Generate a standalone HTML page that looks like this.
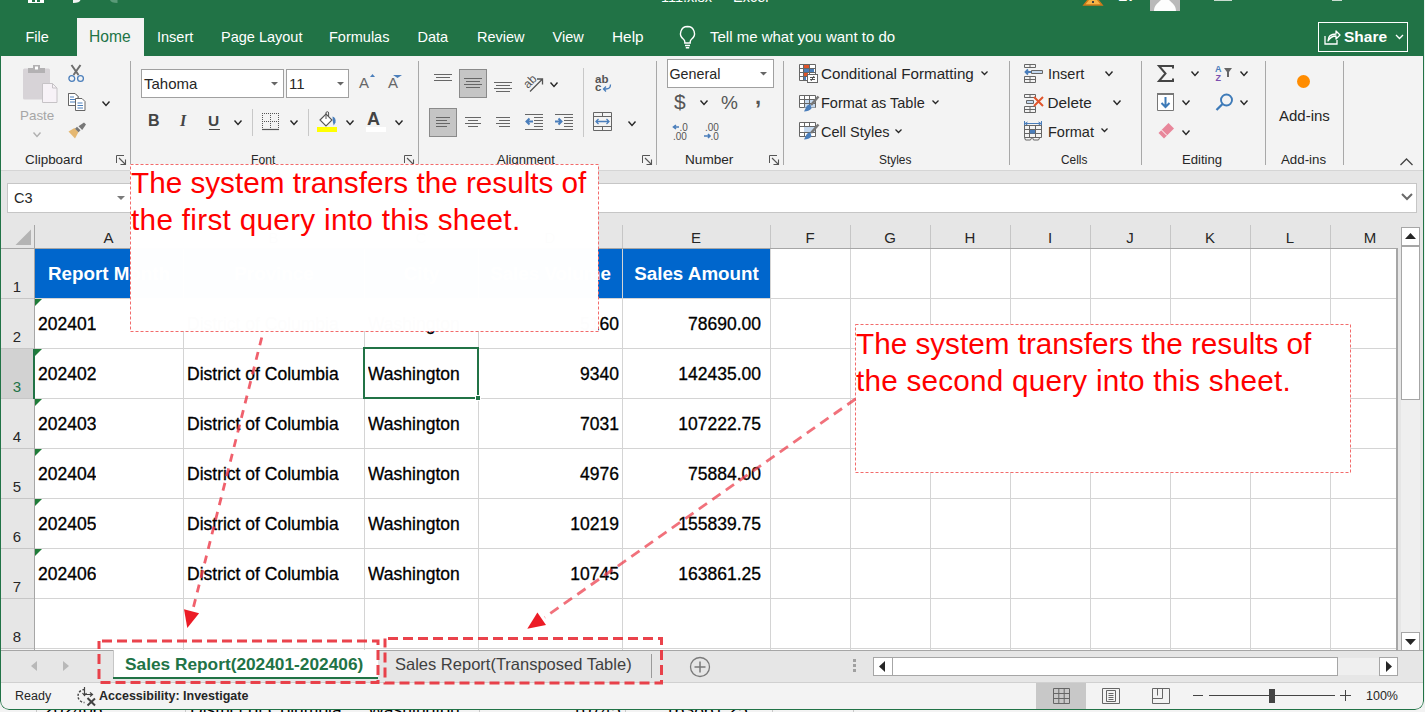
<!DOCTYPE html><html><head><meta charset="utf-8"><style>
*{box-sizing:border-box;margin:0;padding:0}
html,body{width:1425px;height:712px;overflow:hidden;background:#f0f0f0;font-family:"Liberation Sans",sans-serif;color:#262626}
.a{position:absolute;white-space:nowrap}
svg{position:absolute;overflow:visible}
#win{position:absolute;left:0;top:0;width:1424px;height:710px;border-radius:0 0 9px 9px;overflow:hidden;background:#f3f3f3}
#wb{position:absolute;left:0;top:-10px;width:1424px;height:720px;border:1px solid #217346;border-radius:0 0 9px 9px;pointer-events:none}
.tab{position:absolute;top:28px;font-size:14.5px;color:#fff;line-height:18px;white-space:nowrap}
.lbl{position:absolute;top:152px;font-size:12.5px;color:#262626;line-height:16px;white-space:nowrap}
.sep{position:absolute;top:61px;width:1px;height:104px;background:#a8a8a8}
.btn{position:absolute;font-size:14.5px;color:#262626;line-height:18px;white-space:nowrap}
.hdr{position:absolute;top:225px;height:23px;font-size:15px;color:#262626;text-align:center;line-height:24px;border-right:1px solid #c6c6c6}
.rh{position:absolute;left:0;width:34px;height:50px;font-size:15px;color:#262626;text-align:center;line-height:16px;padding-top:31px}
.cell{position:absolute;height:50px;font-size:17.5px;color:#000;line-height:52px;-webkit-text-stroke:0.3px #000;white-space:nowrap;overflow:hidden}
.tri{position:absolute;width:0;height:0;border-top:7px solid #1e7b38;border-right:7px solid transparent}
</style></head><body>
<div class="a" style="left:0;top:708px;width:1425px;height:4px;background:#f3f3f3;overflow:hidden"><div class="a" style="left:36px;top:0;width:1px;height:4px;background:#c8c8c8"></div><div class="a" style="left:185px;top:0;width:1px;height:4px;background:#c8c8c8"></div><div class="a" style="left:338px;top:0;width:1px;height:4px;background:#c8c8c8"></div><div class="a" style="left:479px;top:0;width:1px;height:4px;background:#c8c8c8"></div><div class="a" style="left:625px;top:0;width:1px;height:4px;background:#c8c8c8"></div><div class="a" style="left:772px;top:0;width:1px;height:4px;background:#c8c8c8"></div><div class="a" style="left:853px;top:0;width:1px;height:4px;background:#c8c8c8"></div><div class="a" style="left:44px;top:-7px;font-size:17.5px;line-height:18px;color:#000">202406</div><div class="a" style="left:190px;top:-7px;font-size:17.5px;line-height:18px;color:#000">District of Columbia</div><div class="a" style="left:368px;top:-7px;font-size:17.5px;line-height:18px;color:#000">Washington</div><div class="a" style="left:572px;top:-7px;font-size:17.5px;line-height:18px;color:#000">10745</div><div class="a" style="left:665px;top:-7px;font-size:17.5px;line-height:18px;color:#000">163861.25</div></div>
<div id="win">
<div class="a" style="left:0;top:0;width:1424px;height:56px;background:#217346"></div>
<div class="a" style="left:28px;top:0;width:16px;height:3px;background:#fff"></div>
<div class="a" style="left:32px;top:0;width:3px;height:2px;background:#217346"></div><div class="a" style="left:37px;top:0;width:3px;height:2px;background:#217346"></div>
<svg style="left:73px;top:0" width="8" height="4"><path d="M0 0H7.5C7 1.8 4.5 3 0 3z" fill="#f4f4f4"/></svg>
<svg style="left:110px;top:0" width="8" height="4"><path d="M7.5 0H0C0.5 1.8 3 3 7.5 3z" fill="#5a9a78"/></svg>
<div class="a" style="left:661px;top:-11px;font-size:14.5px;color:#fff;line-height:16px">111.xlsx &nbsp;-&nbsp; Excel</div>
<svg style="left:1083px;top:-6px" width="20" height="12"><path d="M10 0 L19 11 L1 11 Z" fill="#f7b446" stroke="#d07a1a" stroke-width="1.5"/><rect x="9" y="7" width="2" height="2" fill="#444"/></svg>
<div class="a" style="left:1118px;top:-12px;font-size:15px;color:#fff;font-weight:bold;line-height:16px">LT</div>
<svg style="left:1150px;top:0" width="31" height="11"><rect x="0" y="0" width="30" height="11" fill="#b9b9b9"/><path d="M4 11C4 5 8 3 11 0H19C22 3 26 5 26 11z" fill="#fdfdfd"/></svg>
<div class="a" style="left:1214px;top:0;width:18px;height:1px;background:#c9dcd0"></div>
<div class="a" style="left:1332px;top:0;width:10px;height:1px;background:#c9dcd0"></div>
<div class="a" style="left:77px;top:18px;width:67px;height:38px;background:#f3f3f3"></div>
<div class="tab" style="left:25.5px">File</div>
<div class="tab" style="left:89px;color:#217346;font-size:15.6px">Home</div>
<div class="tab" style="left:157px">Insert</div>
<div class="tab" style="left:221px">Page Layout</div>
<div class="tab" style="left:329px">Formulas</div>
<div class="tab" style="left:417.5px">Data</div>
<div class="tab" style="left:477px">Review</div>
<div class="tab" style="left:552.5px">View</div>
<div class="tab" style="left:612px;font-size:15.4px">Help</div>
<svg style="left:678px;top:25px" width="20" height="24"><path d="M9.5 1.5a7 7 0 0 0-4 12.7c.8.7 1.3 1.6 1.3 2.8v1h5.4v-1c0-1.2.5-2.1 1.3-2.8a7 7 0 0 0-4-12.7z" fill="none" stroke="#fff" stroke-width="1.4"/><path d="M7 20.5h5M7.8 22.8h3.4" stroke="#fff" stroke-width="1.4"/></svg>
<div class="tab" style="left:710px;font-size:15px">Tell me what you want to do</div>
<div class="a" style="left:1318px;top:22px;width:90px;height:30px;border:1px solid #fff"></div>
<svg style="left:1323px;top:28px" width="18" height="18"><path d="M2 8v8h12v-4" fill="none" stroke="#fff" stroke-width="1.3"/><path d="M5 13c0-5 3-7 8-7V3l4 4-4 4V8c-4 0-6 1.5-8 5z" fill="none" stroke="#fff" stroke-width="1.3" stroke-linejoin="round"/></svg>
<div class="tab" style="left:1344px;font-weight:bold;font-size:15.5px;top:28px">Share</div>
<svg style="left:1395px;top:34px" width="9" height="6"><path d="M1 1l3.5 3.5L8 1" fill="none" stroke="#fff" stroke-width="1.3"/></svg>
<div class="a" style="left:0;top:170px;width:1424px;height:1px;background:#d5d5d5"></div>
<div class="sep" style="left:130px"></div>
<div class="sep" style="left:418px"></div>
<div class="sep" style="left:656px"></div>
<div class="sep" style="left:783px"></div>
<div class="sep" style="left:1009px"></div>
<div class="sep" style="left:1141px"></div>
<div class="sep" style="left:1265px"></div>
<div class="sep" style="left:1343px"></div>
<div class="lbl" style="left:25px;font-size:13.45px">Clipboard</div>
<div class="lbl" style="left:251px;font-size:12.15px">Font</div>
<div class="lbl" style="left:497px;font-size:13.0px">Alignment</div>
<div class="lbl" style="left:685px;font-size:13.6px">Number</div>
<div class="lbl" style="left:879px;font-size:11.9px">Styles</div>
<div class="lbl" style="left:1061px;font-size:11.85px">Cells</div>
<div class="lbl" style="left:1182px;font-size:13.1px">Editing</div>
<div class="lbl" style="left:1281px;font-size:13.3px">Add-ins</div>
<svg style="left:23px;top:64px" width="36" height="40"><rect x="0" y="4.5" width="27" height="31" rx="1.5" fill="#d7d3d7"/><rect x="5" y="4" width="17" height="5" fill="#b3b1b3"/><rect x="10" y="1" width="7" height="4" fill="#b3b1b3"/><rect x="12" y="2.5" width="3" height="3" fill="#fff"/><path d="M19.5 19.5h10l4.5 4.5v14.5h-14.5z" fill="#f7f2f7" stroke="#c6c3c6" stroke-width="1"/><path d="M29.5 19.5v4.5h4.5" fill="none" stroke="#c6c3c6"/></svg>
<div class="btn" style="left:20px;top:107px;color:#a6a6a6;font-size:13.4px">Paste</div>
<svg style="left:33px;top:132px" width="8" height="5"><path d="M0.5 0.5L4.0 4.5L7.5 0.5" fill="none" stroke="#b0b0b0" stroke-width="1.4"/></svg>
<svg style="left:68px;top:64px" width="18" height="19"><path d="M3.5 1l7 10M12.5 1l-7 10" stroke="#6d6d6d" stroke-width="2"/><circle cx="3.8" cy="14.5" r="2.9" fill="none" stroke="#4a7ebb" stroke-width="1.3"/><circle cx="12.5" cy="14.5" r="2.9" fill="none" stroke="#4a7ebb" stroke-width="1.3"/></svg>
<svg style="left:68px;top:93px" width="18" height="19"><path d="M0.5 12.5V0.5h6.5l3 3v2" fill="#fff" stroke="#666" stroke-width="1"/><path d="M0.5 0.5h6.5l3 3V12.5H0.5z" fill="#fff" stroke="#666" stroke-width="1"/><path d="M2 4h4M2 6.5h5M2 9h5" stroke="#4a7ebb" stroke-width="1"/><path d="M7.5 5.5h6.5l3 3V17.5H7.5z" fill="#fff" stroke="#666" stroke-width="1"/><path d="M9.5 10h5M9.5 12.5h5.5M9.5 15h5.5" stroke="#4a7ebb" stroke-width="1"/></svg>
<svg style="left:102px;top:101px" width="8" height="5"><path d="M0.5 0.5L4.0 4.5L7.5 0.5" fill="none" stroke="#262626" stroke-width="1.4"/></svg>
<svg style="left:68px;top:122px" width="19" height="17"><path d="M0.5 9.5L6.5 6l4 4-3.5 6.5z" fill="#e5b872"/><path d="M7 6.8l2 -2 3.5 3.5-2 2z" fill="#777"/><path d="M10.5 4.3l5.5-3.8 2 2-3.8 5.5z" fill="#777"/></svg>
<svg style="left:116px;top:155px" width="11" height="11"><path d="M0.5 8V0.5H8" fill="none" stroke="#555" stroke-width="1"/><path d="M3 3l6.5 6.5M4.5 9.5h5v-5" fill="none" stroke="#555" stroke-width="1.1"/></svg>
<div class="a" style="left:141px;top:69px;width:143px;height:29px;background:#fff;border:1px solid #a0a0a0"></div>
<div class="btn" style="left:144px;top:75px;font-size:15px">Tahoma</div>
<svg style="left:271px;top:82px" width="8" height="4"><path d="M0 0h7l-3.5 3.5z" fill="#666"/></svg>
<div class="a" style="left:286px;top:69px;width:63px;height:29px;background:#fff;border:1px solid #a0a0a0"></div>
<div class="btn" style="left:289px;top:75px;font-size:15px">11</div>
<svg style="left:337px;top:82px" width="8" height="4"><path d="M0 0h7l-3.5 3.5z" fill="#666"/></svg>
<div class="a" style="left:359px;top:75px;font-size:15px;color:#666;line-height:16px">A</div>
<svg style="left:370px;top:74px" width="6" height="4"><path d="M0 3L2.5 0 5 3z" fill="#4a7ebb"/></svg>
<div class="a" style="left:388px;top:75px;font-size:15px;color:#666;line-height:16px">A</div>
<svg style="left:393px;top:75px" width="10" height="4"><path d="M0 0h9l-4.5 3z" fill="#4a7ebb"/></svg>
<div class="a" style="left:148px;top:113px;font-size:16px;font-weight:bold;color:#444;line-height:16px">B</div>
<div class="a" style="left:180px;top:113px;font-size:16px;font-weight:bold;font-style:italic;color:#444;line-height:16px;font-family:'Liberation Serif',serif">I</div>
<div class="a" style="left:208px;top:113px;font-size:15.5px;font-weight:bold;color:#444;line-height:16px">U</div>
<div class="a" style="left:209px;top:129px;width:11px;height:1px;background:#444"></div>
<svg style="left:234px;top:120px" width="8" height="5"><path d="M0.5 0.5L4.0 4.5L7.5 0.5" fill="none" stroke="#262626" stroke-width="1.4"/></svg>
<div class="a" style="left:252px;top:109px;width:1px;height:27px;background:#c8c8c8"></div>
<svg style="left:262px;top:113px" width="18" height="18"><rect x="0" y="0" width="1" height="1" fill="#555"/><rect x="8" y="0" width="1" height="1" fill="#555"/><rect x="16" y="0" width="1" height="1" fill="#555"/><rect x="0" y="2" width="1" height="1" fill="#555"/><rect x="8" y="2" width="1" height="1" fill="#555"/><rect x="16" y="2" width="1" height="1" fill="#555"/><rect x="0" y="4" width="1" height="1" fill="#555"/><rect x="8" y="4" width="1" height="1" fill="#555"/><rect x="16" y="4" width="1" height="1" fill="#555"/><rect x="0" y="6" width="1" height="1" fill="#555"/><rect x="8" y="6" width="1" height="1" fill="#555"/><rect x="16" y="6" width="1" height="1" fill="#555"/><rect x="0" y="8" width="1" height="1" fill="#555"/><rect x="8" y="8" width="1" height="1" fill="#555"/><rect x="16" y="8" width="1" height="1" fill="#555"/><rect x="0" y="10" width="1" height="1" fill="#555"/><rect x="8" y="10" width="1" height="1" fill="#555"/><rect x="16" y="10" width="1" height="1" fill="#555"/><rect x="0" y="12" width="1" height="1" fill="#555"/><rect x="8" y="12" width="1" height="1" fill="#555"/><rect x="16" y="12" width="1" height="1" fill="#555"/><rect x="0" y="14" width="1" height="1" fill="#555"/><rect x="8" y="14" width="1" height="1" fill="#555"/><rect x="16" y="14" width="1" height="1" fill="#555"/><rect x="2" y="0" width="1" height="1" fill="#555"/><rect x="4" y="0" width="1" height="1" fill="#555"/><rect x="6" y="0" width="1" height="1" fill="#555"/><rect x="10" y="0" width="1" height="1" fill="#555"/><rect x="12" y="0" width="1" height="1" fill="#555"/><rect x="14" y="0" width="1" height="1" fill="#555"/><rect x="2" y="8" width="1" height="1" fill="#555"/><rect x="4" y="8" width="1" height="1" fill="#555"/><rect x="6" y="8" width="1" height="1" fill="#555"/><rect x="10" y="8" width="1" height="1" fill="#555"/><rect x="12" y="8" width="1" height="1" fill="#555"/><rect x="14" y="8" width="1" height="1" fill="#555"/><path d="M0 16.5h17" stroke="#555" stroke-width="1.2"/></svg>
<svg style="left:290px;top:120px" width="8" height="5"><path d="M0.5 0.5L4.0 4.5L7.5 0.5" fill="none" stroke="#262626" stroke-width="1.4"/></svg>
<div class="a" style="left:308px;top:109px;width:1px;height:27px;background:#c8c8c8"></div>
<svg style="left:318px;top:111px" width="20" height="17"><path d="M2 9l6-6 6 6-6 6z" fill="#fff" stroke="#555" stroke-width="1.1"/><path d="M8 8V2a1.3 1.3 0 0 1 2.6 0v3" fill="none" stroke="#555" stroke-width="1"/><path d="M14.5 5.5c2.5.5 3.5 2.5 3 6l-1.8 3-.8-3.5z" fill="#4a7ebb"/></svg>
<div class="a" style="left:317px;top:127px;width:20px;height:5px;background:#ffff00"></div>
<svg style="left:346px;top:120px" width="8" height="5"><path d="M0.5 0.5L4.0 4.5L7.5 0.5" fill="none" stroke="#262626" stroke-width="1.4"/></svg>
<div class="a" style="left:367px;top:110px;font-size:18px;font-weight:bold;color:#444;line-height:18px">A</div>
<div class="a" style="left:366px;top:127px;width:20px;height:5px;background:#fff"></div>
<svg style="left:395px;top:120px" width="8" height="5"><path d="M0.5 0.5L4.0 4.5L7.5 0.5" fill="none" stroke="#262626" stroke-width="1.4"/></svg>
<svg style="left:404px;top:155px" width="11" height="11"><path d="M0.5 8V0.5H8" fill="none" stroke="#555" stroke-width="1"/><path d="M3 3l6.5 6.5M4.5 9.5h5v-5" fill="none" stroke="#555" stroke-width="1.1"/></svg>
<svg style="left:434px;top:74px" width="30" height="30"><rect x="0" y="0" width="18" height="1" fill="#666"/><rect x="2" y="3" width="14" height="1" fill="#666"/><rect x="0" y="6" width="18" height="1" fill="#666"/></svg>
<div class="a" style="left:459px;top:69px;width:28px;height:29px;background:#c5c5c5;border:1px solid #8a8a8a"></div>
<svg style="left:464px;top:78px" width="30" height="30"><rect x="0" y="0" width="18" height="1" fill="#666"/><rect x="2" y="3" width="14" height="1" fill="#666"/><rect x="0" y="6" width="18" height="1" fill="#666"/><rect x="2" y="9" width="14" height="1" fill="#666"/></svg>
<svg style="left:494px;top:82px" width="30" height="30"><rect x="0" y="0" width="18" height="1" fill="#666"/><rect x="2" y="3" width="14" height="1" fill="#666"/><rect x="0" y="6" width="18" height="1" fill="#666"/><rect x="2" y="9" width="14" height="1" fill="#666"/></svg>
<svg style="left:523px;top:72px" width="22" height="22"><text x="0" y="0" transform="translate(5 17) rotate(-45)" font-family="Liberation Sans" font-size="12" fill="#555">ab</text><path d="M7 19.5L19 7.5M14 7h5.5v5.5" fill="none" stroke="#555" stroke-width="1.3"/></svg>
<svg style="left:550px;top:82px" width="8" height="5"><path d="M0.5 0.5L4.0 4.5L7.5 0.5" fill="none" stroke="#262626" stroke-width="1.4"/></svg>
<div class="a" style="left:583px;top:68px;width:1px;height:69px;background:#c8c8c8"></div>
<svg style="left:595px;top:73px" width="18" height="20"><text x="0" y="9.5" font-family="Liberation Sans" font-size="11.5" font-weight="bold" fill="#555">ab</text><text x="0" y="18" font-family="Liberation Sans" font-size="11.5" font-weight="bold" fill="#555">c</text><path d="M15.5 11.5c0 3-1.5 4.5-4.5 4.5H8.5M11 13.5l-2.5 2.5 2.5 2.5" fill="none" stroke="#4a7ebb" stroke-width="1.3"/></svg>
<div class="a" style="left:429px;top:108px;width:28px;height:29px;background:#c5c5c5;border:1px solid #8a8a8a"></div>
<svg style="left:436px;top:117px" width="30" height="30"><rect x="0" y="0" width="14" height="1" fill="#666"/><rect x="0" y="3" width="11" height="1" fill="#666"/><rect x="0" y="6" width="14" height="1" fill="#666"/><rect x="0" y="9" width="11" height="1" fill="#666"/></svg>
<svg style="left:465px;top:117px" width="30" height="30"><rect x="0" y="0" width="16" height="1" fill="#666"/><rect x="3" y="3" width="10" height="1" fill="#666"/><rect x="0" y="6" width="16" height="1" fill="#666"/><rect x="3" y="9" width="10" height="1" fill="#666"/></svg>
<svg style="left:496px;top:117px" width="30" height="30"><rect x="0" y="0" width="14" height="1" fill="#666"/><rect x="3" y="3" width="11" height="1" fill="#666"/><rect x="0" y="6" width="14" height="1" fill="#666"/><rect x="3" y="9" width="11" height="1" fill="#666"/></svg>
<svg style="left:525px;top:114px" width="19" height="17"><rect x="0" y="0" width="18" height="1" fill="#666"/><rect x="9" y="3" width="9" height="1" fill="#666"/><rect x="9" y="6" width="9" height="1" fill="#666"/><rect x="9" y="9" width="9" height="1" fill="#666"/><rect x="9" y="12" width="9" height="1" fill="#666"/><rect x="0" y="15" width="18" height="1" fill="#666"/><path d="M8 7.5H2M4.5 4.5L1.5 7.5l3 3" fill="none" stroke="#4a7ebb" stroke-width="2"/></svg>
<svg style="left:555px;top:114px" width="19" height="17"><rect x="0" y="0" width="18" height="1" fill="#666"/><rect x="9" y="3" width="9" height="1" fill="#666"/><rect x="9" y="6" width="9" height="1" fill="#666"/><rect x="9" y="9" width="9" height="1" fill="#666"/><rect x="9" y="12" width="9" height="1" fill="#666"/><rect x="0" y="15" width="18" height="1" fill="#666"/><path d="M0 7.5h6M3.5 4.5l3 3-3 3" fill="none" stroke="#4a7ebb" stroke-width="2"/></svg>
<svg style="left:593px;top:112px" width="20" height="20"><path d="M0.5 0.5h18v18H0.5zM0.5 4.5h18M0.5 14.5h18M9.5 0.5v4M9.5 14.5v4" fill="none" stroke="#666" stroke-width="1"/><path d="M3 9.5h13M5.5 7l-2.5 2.5 2.5 2.5M13.5 7l2.5 2.5-2.5 2.5" fill="none" stroke="#4a7ebb" stroke-width="1.3"/></svg>
<svg style="left:628px;top:121px" width="8" height="5"><path d="M0.5 0.5L4.0 4.5L7.5 0.5" fill="none" stroke="#262626" stroke-width="1.4"/></svg>
<svg style="left:642px;top:155px" width="11" height="11"><path d="M0.5 8V0.5H8" fill="none" stroke="#555" stroke-width="1"/><path d="M3 3l6.5 6.5M4.5 9.5h5v-5" fill="none" stroke="#555" stroke-width="1.1"/></svg>
<div class="a" style="left:667px;top:59px;width:107px;height:29px;background:#fff;border:1px solid #a0a0a0"></div>
<div class="btn" style="left:669.5px;top:65px;font-size:14.3px">General</div>
<svg style="left:760px;top:72px" width="8" height="4"><path d="M0 0h7l-3.5 3.5z" fill="#666"/></svg>
<div class="a" style="left:674px;top:91px;font-size:21px;color:#555;line-height:22px">$</div>
<svg style="left:700px;top:100px" width="8" height="5"><path d="M0.5 0.5L4.0 4.5L7.5 0.5" fill="none" stroke="#262626" stroke-width="1.4"/></svg>
<div class="a" style="left:721px;top:93px;font-size:19px;color:#555;line-height:20px">%</div>
<div class="a" style="left:755px;top:86px;font-size:22px;font-weight:bold;color:#555;line-height:22px">,</div>
<svg style="left:672px;top:122px" width="18" height="18"><path d="M7 5H2M4 3L1.5 5 4 7" fill="none" stroke="#4a7ebb" stroke-width="1.6"/><text x="7.5" y="9" font-family="Liberation Sans" font-size="10" fill="#555">.0</text><text x="1" y="17.5" font-family="Liberation Sans" font-size="10" fill="#555">.00</text></svg>
<svg style="left:703px;top:122px" width="18" height="18"><text x="2" y="9" font-family="Liberation Sans" font-size="10" fill="#555">.00</text><path d="M1 14h6M5 12l2 2-2 2" fill="none" stroke="#4a7ebb" stroke-width="1.6"/><text x="7.5" y="17.5" font-family="Liberation Sans" font-size="10" fill="#555">.0</text></svg>
<svg style="left:769px;top:155px" width="11" height="11"><path d="M0.5 8V0.5H8" fill="none" stroke="#555" stroke-width="1"/><path d="M3 3l6.5 6.5M4.5 9.5h5v-5" fill="none" stroke="#555" stroke-width="1.1"/></svg>
<svg style="left:799px;top:64px" width="20" height="20"><path d="M0.5 0.5h16v16H0.5z" fill="#fff" stroke="#666"/><rect x="5" y="1" width="5" height="3" fill="#e0542a"/><rect x="5" y="5" width="10" height="3" fill="#4a7ebb"/><rect x="5" y="9" width="4" height="3" fill="#e0542a"/><rect x="5" y="13" width="2" height="3" fill="#4a7ebb"/><path d="M0.5 4.5h16M0.5 8.5h16M0.5 12.5h16M4.5 0.5v16M10.5 0.5v16" fill="none" stroke="#666" stroke-width="1"/><rect x="8.5" y="10.5" width="10" height="8" fill="#fff" stroke="#666"/><path d="M11 13.5h5M11 15.5h5M15 12l-3 5" fill="none" stroke="#444" stroke-width="0.9"/></svg>
<div class="btn" style="left:821px;top:65px;font-size:15.2px">Conditional Formatting</div>
<svg style="left:981px;top:71px" width="7" height="4"><path d="M0.5 0.5L3.5 3.5L6.5 0.5" fill="none" stroke="#262626" stroke-width="1.3"/></svg>
<svg style="left:799px;top:95px" width="21" height="18"><path d="M0.5 0.5h16v12H0.5z" fill="#fff" stroke="#666"/><rect x="5" y="4.5" width="11" height="8" fill="#c4d8ee"/><path d="M0.5 4.5h16M0.5 8.5h16M5.5 0.5v12M10.5 0.5v12" fill="none" stroke="#666" stroke-width="1"/><path d="M19.5 1.5L12 10" stroke="#777" stroke-width="2.5"/><path d="M11.5 9.5c-2-0.5-4 1-4.5 3l-2 4c3 0 6-1 7.5-3z" fill="#4a7ebb"/></svg>
<div class="btn" style="left:821px;top:94px;font-size:14.5px">Format as Table</div>
<svg style="left:932px;top:100px" width="7" height="4"><path d="M0.5 0.5L3.5 3.5L6.5 0.5" fill="none" stroke="#262626" stroke-width="1.3"/></svg>
<svg style="left:799px;top:122px" width="21" height="19"><path d="M0.5 0.5h16v14H0.5z" fill="#fff" stroke="#666"/><rect x="5" y="4.5" width="11" height="6" fill="#c4d8ee"/><path d="M0.5 4.5h16M0.5 10.5h16M5.5 0.5v4M5.5 10.5v4M10.5 0.5v4M10.5 10.5v4" fill="none" stroke="#666" stroke-width="1"/><path d="M19.5 2.5L12 11" stroke="#777" stroke-width="2.5"/><path d="M11.5 10.5c-2-0.5-4 1-4.5 3l-2 4c3 0 6-1 7.5-3z" fill="#4a7ebb"/></svg>
<div class="btn" style="left:821px;top:123px;font-size:14.5px">Cell Styles</div>
<svg style="left:895px;top:129px" width="7" height="4"><path d="M0.5 0.5L3.5 3.5L6.5 0.5" fill="none" stroke="#262626" stroke-width="1.3"/></svg>
<svg style="left:1024px;top:64px" width="20" height="20"><path d="M0.5 0.5h11v3H0.5zM6 0.5v3M7.5 6.5h11v3h-11zM13 6.5v3M0.5 12.5h11v6H0.5zM0.5 15.5h11M6 12.5v6" fill="none" stroke="#666"/><rect x="8" y="7" width="10" height="2" fill="#c4d8ee"/><path d="M7 8H1.5M4 5.5L1.5 8 4 10.5" fill="none" stroke="#4a7ebb" stroke-width="1.8"/></svg>
<div class="btn" style="left:1048px;top:65px">Insert</div>
<svg style="left:1105px;top:71px" width="8" height="5"><path d="M0.5 0.5L4.0 4.5L7.5 0.5" fill="none" stroke="#262626" stroke-width="1.4"/></svg>
<svg style="left:1024px;top:94px" width="21" height="20"><path d="M0.5 0.5h11v3H0.5zM6 0.5v3M2.5 6.5h7v3h-7zM0.5 12.5h11v6H0.5zM0.5 15.5h11M6 12.5v6" fill="none" stroke="#666"/><rect x="3" y="7" width="6" height="2" fill="#c4d8ee"/><path d="M10 3l9 9M19 3l-9 9" stroke="#e0542a" stroke-width="2"/></svg>
<div class="btn" style="left:1047.5px;top:94px;font-size:15.3px">Delete</div>
<svg style="left:1113px;top:100px" width="8" height="5"><path d="M0.5 0.5L4.0 4.5L7.5 0.5" fill="none" stroke="#262626" stroke-width="1.4"/></svg>
<svg style="left:1024px;top:121px" width="20" height="20"><path d="M1 2.5h16M3.5 1l-2.5 1.5 2.5 1.5M14.5 1l2.5 1.5-2.5 1.5" fill="none" stroke="#4a7ebb" stroke-width="1"/><path d="M0.5 0v5M17.5 0v5" stroke="#4a7ebb"/><path d="M0.5 4.5h17v12H0.5zM0.5 8.5h17M0.5 12.5h17M5.5 4.5v12M11.5 4.5v12" fill="none" stroke="#666"/><rect x="6" y="9" width="5" height="3.5" fill="#4a7ebb"/><path d="M0.5 16.5l1 2.5h5l1-2M8.5 16.5l1 2.5h5l1-2" fill="none" stroke="#666"/></svg>
<div class="btn" style="left:1048px;top:123px">Format</div>
<svg style="left:1101px;top:128px" width="7" height="4"><path d="M0.5 0.5L3.5 3.5L6.5 0.5" fill="none" stroke="#262626" stroke-width="1.3"/></svg>
<svg style="left:1158px;top:65px" width="16" height="17"><path d="M15 3.5V1H1l6.5 7.5L1 16h14v-2.5" fill="none" stroke="#444" stroke-width="2"/></svg>
<svg style="left:1191px;top:71px" width="8" height="5"><path d="M0.5 0.5L4.0 4.5L7.5 0.5" fill="none" stroke="#262626" stroke-width="1.4"/></svg>
<svg style="left:1215px;top:64px" width="18" height="18"><text x="0" y="8" font-family="Liberation Sans" font-size="9" font-weight="bold" fill="#4a7ebb">A</text><text x="0.5" y="16.5" font-family="Liberation Sans" font-size="9" font-weight="bold" fill="#7c4fb0">Z</text><path d="M9 4h8l-3 4v5h-2V8z" fill="#666"/></svg>
<svg style="left:1240px;top:71px" width="8" height="5"><path d="M0.5 0.5L4.0 4.5L7.5 0.5" fill="none" stroke="#262626" stroke-width="1.4"/></svg>
<svg style="left:1157px;top:93px" width="18" height="18"><path d="M0.5 0.5h16v17H0.5z" fill="#fff" stroke="#777"/><rect x="0" y="0" width="17" height="2" fill="#777"/><path d="M8.5 4v10M4.5 10l4 4 4-4" fill="none" stroke="#3d7ab8" stroke-width="2"/></svg>
<svg style="left:1182px;top:100px" width="8" height="5"><path d="M0.5 0.5L4.0 4.5L7.5 0.5" fill="none" stroke="#262626" stroke-width="1.4"/></svg>
<svg style="left:1215px;top:93px" width="20" height="19"><circle cx="11.5" cy="7" r="5.5" fill="none" stroke="#3d7ab8" stroke-width="1.9"/><path d="M7.5 11l-6 6" stroke="#3d7ab8" stroke-width="2.3"/></svg>
<svg style="left:1240px;top:100px" width="8" height="5"><path d="M0.5 0.5L4.0 4.5L7.5 0.5" fill="none" stroke="#262626" stroke-width="1.4"/></svg>
<svg style="left:1157px;top:122px" width="18" height="18"><path d="M11.5 1L17 6.5 7 16.5 1.5 11z" fill="#e8869a"/><path d="M4.5 8l5.5 5.5" stroke="#fff" stroke-width="1"/></svg>
<svg style="left:1182px;top:130px" width="8" height="5"><path d="M0.5 0.5L4.0 4.5L7.5 0.5" fill="none" stroke="#262626" stroke-width="1.4"/></svg>
<div class="a" style="left:1297px;top:75px;width:13px;height:13px;border-radius:50%;background:#ff8c00"></div>
<div class="btn" style="left:1279px;top:107px;font-size:15px">Add-ins</div>
<svg style="left:1400px;top:158px" width="13" height="8"><path d="M0.5 7L6.5 1l6 6" fill="none" stroke="#444" stroke-width="1.3"/></svg>
<div class="a" style="left:0;top:171px;width:1424px;height:54px;background:#e6e6e6"></div>
<div class="a" style="left:7px;top:183px;width:135px;height:30px;background:#fff;border:1px solid #c6c6c6"></div>
<div class="a" style="left:14px;top:189px;font-size:14.5px;color:#262626;line-height:18px">C3</div>
<svg style="left:117px;top:196px" width="9" height="5"><path d="M0 0h8l-4 4z" fill="#7a7a7a"/></svg>
<div class="a" style="left:220px;top:183px;width:1197px;height:30px;background:#fff;border:1px solid #c6c6c6"></div>
<svg style="left:1401px;top:193px" width="12" height="8"><path d="M1 1l5 5 5-5" fill="none" stroke="#6a6a6a" stroke-width="2"/></svg>
<div class="a" style="left:0;top:225px;width:1398px;height:23px;background:#e6e6e6"></div>
<div class="a" style="left:34px;top:248px;width:1364px;height:402px;background:#fff"></div>
<div class="a" style="left:34px;top:225px;width:1px;height:425px;background:#a6a6a6"></div>
<div class="a" style="left:0;top:248px;width:1398px;height:1px;background:#a6a6a6"></div>
<svg style="left:15px;top:229px" width="17" height="17"><path d="M0.5 16H16V0.5z" fill="#b4b4b4"/></svg>
<div class="a" style="left:34px;top:225px;width:149px;height:23px;font-size:15px;line-height:25px;text-align:center;color:#262626">A</div>
<div class="a" style="left:183px;top:225px;width:1px;height:23px;background:#c6c6c6"></div>
<div class="a" style="left:183px;top:225px;width:181px;height:23px;font-size:15px;line-height:25px;text-align:center;color:#262626">B</div>
<div class="a" style="left:364px;top:225px;width:1px;height:23px;background:#c6c6c6"></div>
<div class="a" style="left:364px;top:225px;width:114px;height:23px;font-size:15px;line-height:25px;text-align:center;color:#262626">C</div>
<div class="a" style="left:478px;top:225px;width:1px;height:23px;background:#c6c6c6"></div>
<div class="a" style="left:478px;top:225px;width:144px;height:23px;font-size:15px;line-height:25px;text-align:center;color:#262626">D</div>
<div class="a" style="left:622px;top:225px;width:1px;height:23px;background:#c6c6c6"></div>
<div class="a" style="left:622px;top:225px;width:148px;height:23px;font-size:15px;line-height:25px;text-align:center;color:#262626">E</div>
<div class="a" style="left:770px;top:225px;width:1px;height:23px;background:#c6c6c6"></div>
<div class="a" style="left:770px;top:225px;width:80px;height:23px;font-size:15px;line-height:25px;text-align:center;color:#262626">F</div>
<div class="a" style="left:850px;top:225px;width:1px;height:23px;background:#c6c6c6"></div>
<div class="a" style="left:850px;top:225px;width:80px;height:23px;font-size:15px;line-height:25px;text-align:center;color:#262626">G</div>
<div class="a" style="left:930px;top:225px;width:1px;height:23px;background:#c6c6c6"></div>
<div class="a" style="left:930px;top:225px;width:80px;height:23px;font-size:15px;line-height:25px;text-align:center;color:#262626">H</div>
<div class="a" style="left:1010px;top:225px;width:1px;height:23px;background:#c6c6c6"></div>
<div class="a" style="left:1010px;top:225px;width:80px;height:23px;font-size:15px;line-height:25px;text-align:center;color:#262626">I</div>
<div class="a" style="left:1090px;top:225px;width:1px;height:23px;background:#c6c6c6"></div>
<div class="a" style="left:1090px;top:225px;width:80px;height:23px;font-size:15px;line-height:25px;text-align:center;color:#262626">J</div>
<div class="a" style="left:1170px;top:225px;width:1px;height:23px;background:#c6c6c6"></div>
<div class="a" style="left:1170px;top:225px;width:80px;height:23px;font-size:15px;line-height:25px;text-align:center;color:#262626">K</div>
<div class="a" style="left:1250px;top:225px;width:1px;height:23px;background:#c6c6c6"></div>
<div class="a" style="left:1250px;top:225px;width:80px;height:23px;font-size:15px;line-height:25px;text-align:center;color:#262626">L</div>
<div class="a" style="left:1330px;top:225px;width:1px;height:23px;background:#c6c6c6"></div>
<div class="a" style="left:1330px;top:225px;width:80px;height:23px;font-size:15px;line-height:25px;text-align:center;color:#262626">M</div>
<div class="a" style="left:0;top:249px;width:34px;height:50px;background:#e6e6e6"></div>
<div class="a" style="left:0;top:279px;width:34px;text-align:center;font-size:15px;line-height:16px;color:#262626">1</div>
<div class="a" style="left:0;top:298px;width:34px;height:1px;background:#c6c6c6"></div>
<div class="a" style="left:0;top:299px;width:34px;height:50px;background:#e6e6e6"></div>
<div class="a" style="left:0;top:329px;width:34px;text-align:center;font-size:15px;line-height:16px;color:#262626">2</div>
<div class="a" style="left:0;top:348px;width:34px;height:1px;background:#c6c6c6"></div>
<div class="a" style="left:0;top:349px;width:34px;height:50px;background:#d2d2d2"></div>
<div class="a" style="left:0;top:379px;width:34px;text-align:center;font-size:15px;line-height:16px;color:#217346">3</div>
<div class="a" style="left:0;top:398px;width:34px;height:1px;background:#c6c6c6"></div>
<div class="a" style="left:0;top:399px;width:34px;height:50px;background:#e6e6e6"></div>
<div class="a" style="left:0;top:429px;width:34px;text-align:center;font-size:15px;line-height:16px;color:#262626">4</div>
<div class="a" style="left:0;top:448px;width:34px;height:1px;background:#c6c6c6"></div>
<div class="a" style="left:0;top:449px;width:34px;height:50px;background:#e6e6e6"></div>
<div class="a" style="left:0;top:479px;width:34px;text-align:center;font-size:15px;line-height:16px;color:#262626">5</div>
<div class="a" style="left:0;top:498px;width:34px;height:1px;background:#c6c6c6"></div>
<div class="a" style="left:0;top:499px;width:34px;height:50px;background:#e6e6e6"></div>
<div class="a" style="left:0;top:529px;width:34px;text-align:center;font-size:15px;line-height:16px;color:#262626">6</div>
<div class="a" style="left:0;top:548px;width:34px;height:1px;background:#c6c6c6"></div>
<div class="a" style="left:0;top:549px;width:34px;height:50px;background:#e6e6e6"></div>
<div class="a" style="left:0;top:579px;width:34px;text-align:center;font-size:15px;line-height:16px;color:#262626">7</div>
<div class="a" style="left:0;top:598px;width:34px;height:1px;background:#c6c6c6"></div>
<div class="a" style="left:0;top:599px;width:34px;height:50px;background:#e6e6e6"></div>
<div class="a" style="left:0;top:629px;width:34px;text-align:center;font-size:15px;line-height:16px;color:#262626">8</div>
<div class="a" style="left:0;top:648px;width:34px;height:1px;background:#c6c6c6"></div>
<div class="a" style="left:33px;top:349px;width:2px;height:50px;background:#217346"></div>
<div class="a" style="left:35px;top:249px;width:735px;height:49px;background:#0066cc"></div>
<div class="a" style="left:183px;top:249px;width:1px;height:401px;background:#d4d4d4"></div>
<div class="a" style="left:364px;top:249px;width:1px;height:401px;background:#d4d4d4"></div>
<div class="a" style="left:478px;top:249px;width:1px;height:401px;background:#d4d4d4"></div>
<div class="a" style="left:622px;top:249px;width:1px;height:401px;background:#d4d4d4"></div>
<div class="a" style="left:770px;top:249px;width:1px;height:401px;background:#d4d4d4"></div>
<div class="a" style="left:850px;top:249px;width:1px;height:401px;background:#d4d4d4"></div>
<div class="a" style="left:930px;top:249px;width:1px;height:401px;background:#d4d4d4"></div>
<div class="a" style="left:1010px;top:249px;width:1px;height:401px;background:#d4d4d4"></div>
<div class="a" style="left:1090px;top:249px;width:1px;height:401px;background:#d4d4d4"></div>
<div class="a" style="left:1170px;top:249px;width:1px;height:401px;background:#d4d4d4"></div>
<div class="a" style="left:1250px;top:249px;width:1px;height:401px;background:#d4d4d4"></div>
<div class="a" style="left:1330px;top:249px;width:1px;height:401px;background:#d4d4d4"></div>
<div class="a" style="left:1397px;top:249px;width:1px;height:401px;background:#d4d4d4"></div>
<div class="a" style="left:35px;top:298px;width:1363px;height:1px;background:#d4d4d4"></div>
<div class="a" style="left:35px;top:348px;width:1363px;height:1px;background:#d4d4d4"></div>
<div class="a" style="left:35px;top:398px;width:1363px;height:1px;background:#d4d4d4"></div>
<div class="a" style="left:35px;top:448px;width:1363px;height:1px;background:#d4d4d4"></div>
<div class="a" style="left:35px;top:498px;width:1363px;height:1px;background:#d4d4d4"></div>
<div class="a" style="left:35px;top:548px;width:1363px;height:1px;background:#d4d4d4"></div>
<div class="a" style="left:35px;top:598px;width:1363px;height:1px;background:#d4d4d4"></div>
<div class="a" style="left:35px;top:648px;width:1363px;height:1px;background:#d4d4d4"></div>
<div class="cell" style="left:35px;top:248px;width:148px;text-align:center;color:#fff;font-weight:bold;font-size:18.8px;-webkit-text-stroke:0">Report Month</div>
<div class="cell" style="left:184px;top:248px;width:180px;text-align:center;color:#fff;font-weight:bold;font-size:18.8px;-webkit-text-stroke:0">Province</div>
<div class="cell" style="left:365px;top:248px;width:113px;text-align:center;color:#fff;font-weight:bold;font-size:18.8px;-webkit-text-stroke:0">City</div>
<div class="cell" style="left:479px;top:248px;width:143px;text-align:center;color:#fff;font-weight:bold;font-size:18.8px;-webkit-text-stroke:0">Sales Volume</div>
<div class="cell" style="left:623px;top:248px;width:147px;text-align:center;color:#fff;font-weight:bold;font-size:18.8px;-webkit-text-stroke:0">Sales Amount</div>
<div class="tri" style="left:35px;top:299px"></div>
<div class="cell" style="left:38px;top:298px">202401</div>
<div class="cell" style="left:187px;top:298px">District of Columbia</div>
<div class="cell" style="left:368px;top:298px">Washington</div>
<div class="cell" style="left:478px;top:298px;width:141px;text-align:right">5160</div>
<div class="cell" style="left:622px;top:298px;width:139px;text-align:right">78690.00</div>
<div class="tri" style="left:35px;top:349px"></div>
<div class="cell" style="left:38px;top:348px">202402</div>
<div class="cell" style="left:187px;top:348px">District of Columbia</div>
<div class="cell" style="left:368px;top:348px">Washington</div>
<div class="cell" style="left:478px;top:348px;width:141px;text-align:right">9340</div>
<div class="cell" style="left:622px;top:348px;width:139px;text-align:right">142435.00</div>
<div class="tri" style="left:35px;top:399px"></div>
<div class="cell" style="left:38px;top:398px">202403</div>
<div class="cell" style="left:187px;top:398px">District of Columbia</div>
<div class="cell" style="left:368px;top:398px">Washington</div>
<div class="cell" style="left:478px;top:398px;width:141px;text-align:right">7031</div>
<div class="cell" style="left:622px;top:398px;width:139px;text-align:right">107222.75</div>
<div class="tri" style="left:35px;top:449px"></div>
<div class="cell" style="left:38px;top:448px">202404</div>
<div class="cell" style="left:187px;top:448px">District of Columbia</div>
<div class="cell" style="left:368px;top:448px">Washington</div>
<div class="cell" style="left:478px;top:448px;width:141px;text-align:right">4976</div>
<div class="cell" style="left:622px;top:448px;width:139px;text-align:right">75884.00</div>
<div class="tri" style="left:35px;top:499px"></div>
<div class="cell" style="left:38px;top:498px">202405</div>
<div class="cell" style="left:187px;top:498px">District of Columbia</div>
<div class="cell" style="left:368px;top:498px">Washington</div>
<div class="cell" style="left:478px;top:498px;width:141px;text-align:right">10219</div>
<div class="cell" style="left:622px;top:498px;width:139px;text-align:right">155839.75</div>
<div class="tri" style="left:35px;top:549px"></div>
<div class="cell" style="left:38px;top:548px">202406</div>
<div class="cell" style="left:187px;top:548px">District of Columbia</div>
<div class="cell" style="left:368px;top:548px">Washington</div>
<div class="cell" style="left:478px;top:548px;width:141px;text-align:right">10745</div>
<div class="cell" style="left:622px;top:548px;width:139px;text-align:right">163861.25</div>
<div class="a" style="left:363px;top:347px;width:116px;height:52px;border:2px solid #217346"></div>
<div class="a" style="left:475px;top:395px;width:6px;height:6px;background:#217346;border:1px solid #fff"></div>
<div class="a" style="left:1398px;top:225px;width:25px;height:425px;background:#e6e6e6"></div>
<div class="a" style="left:1396px;top:248px;width:2px;height:402px;background:#a6a6a6"></div>
<div class="a" style="left:1401px;top:246px;width:19px;height:386px;background:#efefef"></div>
<div class="a" style="left:1401px;top:227px;width:19px;height:19px;background:#fff;border:1px solid #a6a6a6"></div>
<svg style="left:1405px;top:233px" width="11" height="6"><path d="M0 6L5.5 0L11 6z" fill="#262626"/></svg>
<div class="a" style="left:1401px;top:246px;width:19px;height:154px;background:#fff;border:1px solid #a6a6a6"></div>
<div class="a" style="left:1401px;top:632px;width:19px;height:19px;background:#fff;border:1px solid #a6a6a6"></div>
<svg style="left:1405px;top:639px" width="11" height="6"><path d="M0 0L5.5 6L11 0z" fill="#262626"/></svg>
<div class="a" style="left:0;top:650px;width:1424px;height:1px;background:#a6a6a6"></div>
<div class="a" style="left:0;top:651px;width:1424px;height:31px;background:#e6e6e6"></div>
<div class="a" style="left:0;top:682px;width:1424px;height:1px;background:#d0d0d0"></div>
<svg style="left:31px;top:661px" width="6" height="10"><path d="M6 0L0 5l6 5z" fill="#b8b8b8"/></svg>
<svg style="left:63px;top:661px" width="6" height="10"><path d="M0 0l6 5-6 5z" fill="#b8b8b8"/></svg>
<div class="a" style="left:113px;top:650px;width:265px;height:29px;background:#fff;border-left:1px solid #c6c6c6"></div>
<div class="a" style="left:113px;top:677px;width:265px;height:2px;background:#217346"></div>
<div class="a" style="left:125px;top:654px;font-size:17.3px;font-weight:bold;color:#217346;line-height:20px">Sales Report(202401-202406)</div>
<div class="a" style="left:395px;top:654px;font-size:16.5px;color:#404040;line-height:20px">Sales Report(Transposed Table)</div>
<div class="a" style="left:651px;top:654px;width:1px;height:24px;background:#9a9a9a"></div>
<svg style="left:689px;top:656px" width="22" height="22"><circle cx="11" cy="11" r="9.5" fill="none" stroke="#7a7a7a" stroke-width="1.3"/><path d="M11 5.5v11M5.5 11h11" stroke="#7a7a7a" stroke-width="1.5"/></svg>
<div class="a" style="left:853px;top:659px;width:3px;height:3px;background:#a0a0a0;box-shadow:0 5px 0 #a0a0a0,0 10px 0 #a0a0a0"></div>
<div class="a" style="left:873px;top:657px;width:20px;height:19px;background:#fff;border:1px solid #a6a6a6"></div>
<svg style="left:879px;top:661px" width="6" height="11"><path d="M6 0L0 5.5L6 11z" fill="#262626"/></svg>
<div class="a" style="left:892px;top:657px;width:446px;height:19px;background:#fff;border:1px solid #a6a6a6"></div>
<div class="a" style="left:1338px;top:658px;width:41px;height:17px;background:#efefef"></div>
<div class="a" style="left:1379px;top:657px;width:19px;height:19px;background:#fff;border:1px solid #a6a6a6"></div>
<svg style="left:1386px;top:661px" width="6" height="11"><path d="M0 0L6 5.5L0 11z" fill="#262626"/></svg>
<div class="a" style="left:15px;top:688px;font-size:12.5px;color:#262626;line-height:16px">Ready</div>
<svg style="left:76px;top:686px" width="22" height="22"><path d="M8.5 3.5A6.5 6.5 0 0 0 8.5 16.5" fill="none" stroke="#444" stroke-width="1.4" stroke-dasharray="2.2 1.6"/><path d="M8.5 1V9M6.5 7L8.5 9.5 10.5 7M8.5 8.5H16M14 6.5L16.5 8.5 14 10.5" fill="none" stroke="#444" stroke-width="1.2"/><path d="M11.5 12L19 19.5M19 12.5L11.5 19.5" stroke="#444" stroke-width="2"/></svg>
<div class="a" style="left:99px;top:688px;font-size:12.5px;font-weight:bold;color:#262626;line-height:16px">Accessibility: Investigate</div>
<div class="a" style="left:1036px;top:683px;width:50px;height:26px;background:#c8c8c8"></div>
<svg style="left:1053px;top:688px" width="17" height="16"><path d="M0.5 0.5h16v15h-16zM0.5 5.5h16M0.5 10.5h16M5.8 0.5v15M11.2 0.5v15" fill="none" stroke="#666" stroke-width="1"/></svg>
<svg style="left:1102px;top:688px" width="18" height="16"><path d="M0.5 0.5h17v15h-17z" fill="none" stroke="#666"/><path d="M4.5 2.5h9v11h-9zM6.5 5.5h5M6.5 7.5h5M6.5 9.5h5M6.5 11.5h5" fill="none" stroke="#666" stroke-width="1"/></svg>
<svg style="left:1152px;top:688px" width="18" height="16"><path d="M0.5 0.5h17v15h-17zM0.5 10.5h10v-10M5.5 0.5v7" fill="none" stroke="#666"/></svg>
<div class="a" style="left:1193px;top:695px;width:10px;height:1px;background:#444"></div>
<div class="a" style="left:1209px;top:695px;width:126px;height:1px;background:#444"></div>
<div class="a" style="left:1269px;top:689px;width:6px;height:14px;background:#444"></div>
<div class="a" style="left:1340px;top:695px;width:11px;height:1px;background:#444"></div><div class="a" style="left:1345px;top:690px;width:1px;height:11px;background:#444"></div>
<div class="a" style="left:1366px;top:688px;font-size:12.5px;color:#262626;line-height:16px">100%</div>
<div class="a" style="left:130px;top:164px;width:468px;height:167px;background:rgba(255,255,255,0.994)"></div>
<svg style="left:130px;top:164px" width="469" height="168"><rect x="0.5" y="0.5" width="468" height="167" fill="none" stroke="#f26b6b" stroke-width="1" stroke-dasharray="3 2"/></svg>
<div class="a" style="left:131px;top:165px;font-size:29.7px;line-height:36.8px;color:#ff0000">The system transfers the results of<br><span style="letter-spacing:0.31px">the first query into this sheet.</span></div>
<div class="a" style="left:855px;top:324px;width:495px;height:148px;background:rgba(255,255,255,0.994)"></div>
<svg style="left:855px;top:324px" width="496" height="149"><rect x="0.5" y="0.5" width="495" height="148" fill="none" stroke="#f26b6b" stroke-width="1" stroke-dasharray="3 2"/></svg>
<div class="a" style="left:856px;top:326px;font-size:29.7px;line-height:36.8px;color:#ff0000">The system transfers the results of<br><span style="letter-spacing:0.23px">the second query into this sheet.</span></div>
<svg style="left:0;top:0" width="1425" height="712"><path d="M262 336.5 L192.5 611" stroke="#ec3a48" stroke-opacity="0.8" stroke-width="2.8" stroke-dasharray="8 7" stroke-dashoffset="-1" fill="none"/><path d="M187.3 628 L184 609.3 L199.1 613.2z" fill="#ec1c26"/><path d="M855.5 399 L544.7 617.4" stroke="#ec3a48" stroke-opacity="0.72" stroke-width="2.8" stroke-dasharray="10 6.5" fill="none"/><path d="M527.3 628.8 L537.4 612.4 L546 625z" fill="#ec1c26"/><rect x="99" y="641" width="279" height="41.5" fill="none" stroke="#e8333d" stroke-opacity="0.92" stroke-width="3" stroke-dasharray="10 5" stroke-dashoffset="-3"/><rect x="385" y="638.5" width="276.5" height="44.5" fill="none" stroke="#e8333d" stroke-opacity="0.92" stroke-width="3" stroke-dasharray="10 5" stroke-dashoffset="-3"/></svg>
<div id="wb"></div>
</div>
</body></html>
